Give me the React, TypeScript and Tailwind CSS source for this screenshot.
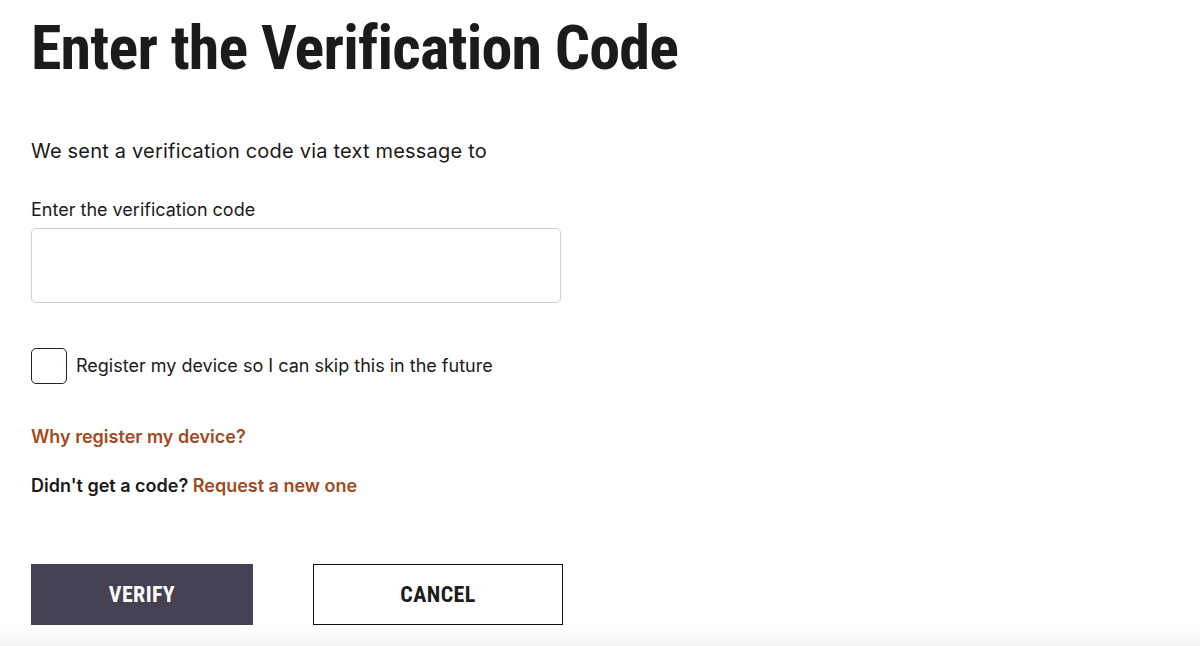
import React from "react";

export default function App() {
  return (
    <div className="w-[1200px] h-[646px] bg-white flex flex-col overflow-hidden font-['Inter',sans-serif] text-[#1a1a1a]">
      <div className="flex-1 pl-[31px]">
        <h1 className="mt-[17px] font-['Roboto',sans-serif] [font-stretch:condensed] text-[62px] leading-[62px] font-bold tracking-[-0.8px] text-[#1b1b1b]">
          Enter the Verification Code
        </h1>
        <p className="mt-[60px] text-[20px] leading-[24px] tracking-[0.2px]">
          We sent a verification code via text message to
        </p>
        <label className="block mt-[37px] text-[18px] leading-[20px]">Enter the verification code</label>
        <input
          type="text"
          className="block mt-[8px] w-[530px] h-[75px] border border-[#cfcfcf] rounded-[5px] px-3 outline-none"
        />
        <label className="mt-[45px] flex items-center gap-[9px] h-[36px]">
          <span className="w-[36px] h-[36px] border-[1.5px] border-[#222] rounded-[5px]" />
          <span className="text-[18px] leading-[22px]">Register my device so I can skip this in the future</span>
        </label>
        <a className="block mt-[42px] text-[18px] leading-[22px] font-semibold text-[#a24a1d]">
          Why register my device?
        </a>
        <p className="mt-[27px] text-[18px] leading-[22px] font-semibold">
          Didn't get a code? <a className="text-[#a24a1d]">Request a new one</a>
        </p>
        <div className="mt-[67px] flex gap-[60px]">
          <button className="w-[222px] h-[61px] bg-[#454152] text-white font-['Roboto',sans-serif] [font-stretch:condensed] text-[22px] font-bold uppercase tracking-[0.4px]">
            Verify
          </button>
          <button className="w-[250px] h-[61px] bg-white border border-[#111] text-[#1b1b1b] font-['Roboto',sans-serif] [font-stretch:condensed] text-[22px] font-bold uppercase tracking-[0.4px]">
            Cancel
          </button>
        </div>
      </div>
      <div className="h-[18px] bg-gradient-to-b from-white to-[#f4f4f4]" />
    </div>
  );
}
